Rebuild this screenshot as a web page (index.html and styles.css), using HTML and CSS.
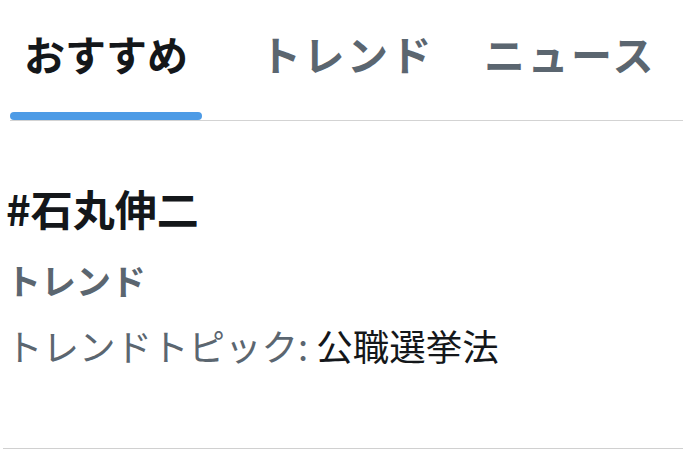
FILE: index.html
```html
<!DOCTYPE html>
<html lang="ja">
<head>
<meta charset="utf-8">
<link rel="stylesheet" href="styles.css">
</head>
<body>
<nav class="tabs">
  <div class="tab active">おすすめ</div>
  <div class="tab">トレンド</div>
  <div class="tab">ニュース</div>
</nav>
<section class="trend">
  <div class="title">#石丸伸二</div>
  <div class="meta">トレンド</div>
  <div class="topic"><span class="label">トレンドトピック: </span>公職選挙法</div>
</section>
</body>
</html>
```
FILE: styles.css
```css
html, body {
  margin: 0;
  padding: 0;
  background: #ffffff;
  font-family: "Noto Sans CJK JP", "Noto Sans", sans-serif;
}
.tabs {
  display: flex;
  margin-left: 10px;
  border-bottom: 1px solid #d3d3d3;
  height: 121px;
  box-sizing: border-box;
}
.tab {
  position: relative;
  flex-shrink: 0;
  white-space: nowrap;
  font-size: 41px;
  font-weight: 700;
  line-height: 1;
  color: #5b6670;
  padding: 33px 14px 0;
  margin-right: 22px;
  letter-spacing: 2.5px;
}
.tab.active {
  color: #14171a;
  letter-spacing: 0;
  margin-right: 44px;
}
.tab.active::after {
  content: "";
  position: absolute;
  left: 0;
  right: 0;
  bottom: 0;
  height: 8px;
  border-radius: 4px;
  background: #4d9be6;
}
.trend {
  padding: 0 0 0 3px;
  height: 327px;
  border-bottom: 1px solid #d0d0d0;
  margin-left: 3px;
}
.title {
  font-size: 42px;
  font-weight: 700;
  color: #14171a;
  line-height: 1;
  padding-top: 66px;
  white-space: nowrap;
}
.meta {
  font-size: 35px;
  font-weight: 700;
  color: #5b6670;
  line-height: 1;
  padding-top: 33px;
  white-space: nowrap;
}
.topic {
  font-size: 36.5px;
  color: #14171a;
  line-height: 1;
  padding-top: 31px;
  white-space: nowrap;
}
.label {
  color: #5b6670;
}
```
